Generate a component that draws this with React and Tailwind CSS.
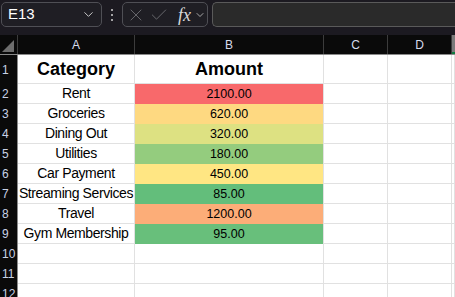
import { ChevronDown, X, Check } from "lucide-react";

const rows = [
  { label: "Rent", amount: "2100.00", color: "bg-[#f8696b]" },
  { label: "Groceries", amount: "620.00", color: "bg-[#fed981]" },
  { label: "Dining Out", amount: "320.00", color: "bg-[#dde182]" },
  { label: "Utilities", amount: "180.00", color: "bg-[#94cc7e]" },
  { label: "Car Payment", amount: "450.00", color: "bg-[#ffe683]" },
  { label: "Streaming Services", amount: "85.00", color: "bg-[#63be7b]" },
  { label: "Travel", amount: "1200.00", color: "bg-[#fcad78]" },
  { label: "Gym Membership", amount: "95.00", color: "bg-[#68bf7b]" },
];

const grid = "grid grid-cols-[18px_117px_189px_64px_64px_1fr]";

const RowNum = ({ n, tall }) => (
  <div
    className={`${tall ? "h-[29px]" : "h-[20px]"} bg-[#0a0a0a] border-r border-[#8a8a8a] flex items-center pl-[2px] text-[12px] text-[#c9d2e6]`}
  >
    {n}
  </div>
);

const Cell = ({ children, tall, className = "" }) => (
  <div
    className={`${tall ? "h-[29px]" : "h-[20px]"} border-r border-b border-[#e1e1e1] flex items-center justify-center whitespace-nowrap ${className}`}
  >
    {children}
  </div>
);

export default function App() {
  return (
    <div
      className="w-[455px] h-[297px] overflow-hidden bg-white"
      style={{ fontFamily: "'Liberation Sans', Arial, sans-serif" }}
    >
      {/* formula bar */}
      <div className="h-[35px] bg-[#1c1a21] flex items-start pt-[2px] pl-[1px]">
        <div className="w-[101px] h-[25px] rounded-[5px] border border-[#4f4f55] bg-[#1f1e24] flex items-center justify-between pl-[6px] pr-[5px]">
          <span className="text-[15px] text-white">E13</span>
          <ChevronDown size={15} strokeWidth={1.6} className="text-[#c8c8c8]" />
        </div>
        <div className="w-[20px] h-[25px] flex items-center justify-center">
          <div className="flex flex-col gap-[3px]">
            <span className="w-[2px] h-[2px] bg-[#d0d0d0] rounded-full" />
            <span className="w-[2px] h-[2px] bg-[#d0d0d0] rounded-full" />
            <span className="w-[2px] h-[2px] bg-[#d0d0d0] rounded-full" />
          </div>
        </div>
        <div className="w-[86px] h-[25px] rounded-[5px] border border-[#4f4f55] bg-[#1f1e24] flex items-center pl-[3px] gap-[3px]">
          <X size={20} strokeWidth={1.1} className="text-[#6d6d72]" />
          <Check size={20} strokeWidth={1.1} className="text-[#6d6d72]" />
          <span
            className="text-[18px] italic text-[#d8d8d8] ml-[6px] leading-none"
            style={{ fontFamily: "'Liberation Serif', 'Times New Roman', serif" }}
          >
            fx
          </span>
          <ChevronDown size={12} strokeWidth={1.6} className="text-[#c8c8c8]" />
        </div>
        <div className="ml-[4px] flex-1 h-[25px] rounded-l-[5px] border border-r-0 border-[#5a5a5a] bg-[#2a2a2a]" />
      </div>

      {/* column headers */}
      <div className={`${grid} h-[20px] bg-[#0a0a0a] border-b border-[#8a8a8a] text-[12px] text-[#d6dcec]`}>
        <div className="relative border-r border-[#3c3c3c]">
          <div className="absolute right-[3px] bottom-[2px] w-0 h-0 border-l-[12px] border-l-transparent border-b-[12px] border-b-[#6e6e6e]" />
        </div>
        <div className="border-r border-[#3c3c3c] flex items-center justify-center">A</div>
        <div className="border-r border-[#3c3c3c] flex items-center justify-center">B</div>
        <div className="border-r border-[#3c3c3c] flex items-center justify-center">C</div>
        <div className="border-r border-[#3c3c3c] flex items-center justify-center">D</div>
        <div className="bg-[#7a7a7a] border-b-2 border-[#107c41]" />
      </div>

      {/* row 1 */}
      <div className={grid}>
        <RowNum n={1} tall />
        <Cell tall className="text-[18px] font-bold text-black">Category</Cell>
        <Cell tall className="text-[18px] font-bold text-black">Amount</Cell>
        <Cell tall />
        <Cell tall />
        <Cell tall />
      </div>

      {rows.map((r, i) => (
        <div key={r.label} className={grid}>
          <RowNum n={i + 2} />
          <Cell className="text-[14px] tracking-[-0.4px] text-black">{r.label}</Cell>
          <div
            className={`h-[20px] flex items-center justify-center text-[12.5px] text-black border-r border-[#e1e1e1] ${r.color}`}
          >
            {r.amount}
          </div>
          <Cell />
          <Cell />
          <Cell />
        </div>
      ))}

      {[10, 11, 12].map((n) => (
        <div key={n} className={grid}>
          <RowNum n={n} />
          <Cell />
          <Cell />
          <Cell />
          <Cell />
          <Cell />
        </div>
      ))}
    </div>
  );
}
